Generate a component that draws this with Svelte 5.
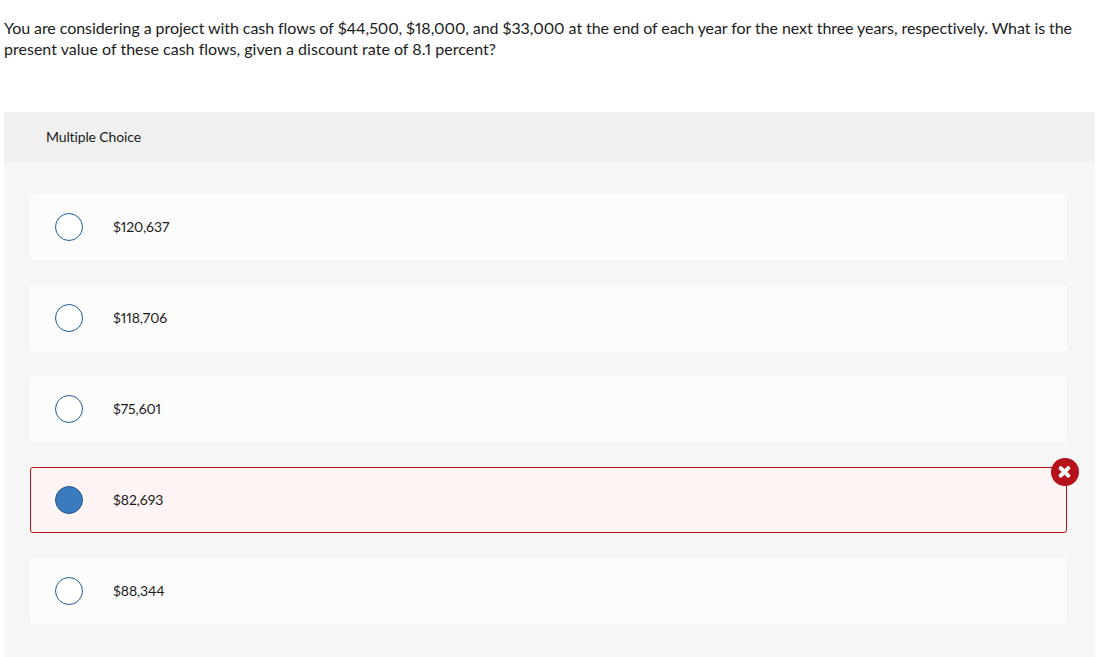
<script lang="ts">
  interface Choice {
    id: number;
    label: string;
  }

  const choices: Choice[] = [
    { id: 1, label: '$120,637' },
    { id: 2, label: '$118,706' },
    { id: 3, label: '$75,601' },
    { id: 4, label: '$82,693' },
    { id: 5, label: '$88,344' },
  ];

  let selected = $state(4);
  const incorrect = 4;
</script>

<main class="question">
  <p class="prompt">
    <span class="line first">You are considering a project with cash flows of $44,500, $18,000, and $33,000 at the end of each year for the next three years, respectively. What is the</span>
    <span class="line second">present value of these cash flows, given a discount rate of 8.1 percent?</span>
  </p>

  <section class="panel">
    <header class="panel-header"><h2>Multiple Choice</h2></header>
    <div class="choices" role="radiogroup" aria-label="Multiple Choice">
      {#each choices as choice (choice.id)}
        <button
          class="choice"
          class:incorrect={choice.id === selected && choice.id === incorrect}
          role="radio"
          aria-checked={choice.id === selected}
          onclick={() => (selected = choice.id)}
        >
          <span class="radio" class:checked={choice.id === selected}></span>
          <span class="label">{choice.label}</span>
          {#if choice.id === selected && choice.id === incorrect}
            <svg class="badge" viewBox="0 0 28 28" aria-hidden="true">
              <circle cx="14" cy="14" r="14" fill="#b5121b" />
              <path d="M9.7 10.1 17.3 17.7M17.3 10.1 9.7 17.7" stroke="#fff" stroke-width="4" stroke-linecap="round" />
            </svg>
          {/if}
        </button>
      {/each}
    </div>
  </section>
</main>

<style>
  :global(body) {
    background: #fff;
    overflow: hidden;
  }
  .question {
    box-sizing: border-box;
    height: 657px;
    padding: 17px 23px 0 4px;
    display: flex;
    flex-direction: column;
    font-family: Lato, 'Open Sans', sans-serif;
    font-variant-ligatures: none;
    font-variant-numeric: proportional-nums;
    color: #1b1b1b;
  }
  .prompt {
    margin: 0;
    height: 95px;
    font-size: 16px;
    line-height: 21px;
    white-space: nowrap;
  }
  .line {
    display: block;
  }
  .first {
    letter-spacing: -0.066px;
  }
  .second {
    letter-spacing: 0.015px;
  }
  .panel {
    flex: 1;
    border-radius: 3px 3px 0 0;
    background: #f6f6f6;
  }
  .panel-header {
    box-sizing: border-box;
    height: 50px;
    padding: 0 0 2px 42px;
    display: flex;
    align-items: center;
    border-radius: 3px 3px 0 0;
    background: #f0f0f0;
  }
  h2 {
    margin: 0;
    font-size: 14px;
    font-weight: 400;
    letter-spacing: -0.13px;
  }
  .choices {
    padding: 32px 28px 0 26px;
    display: flex;
    flex-direction: column;
    gap: 25px;
  }
  .choice {
    position: relative;
    box-sizing: border-box;
    width: 100%;
    height: 66px;
    padding: 0 24px;
    display: flex;
    align-items: center;
    gap: 30px;
    border: 1px solid #fcfcfc;
    border-radius: 3px;
    background: #fcfcfc;
    color: inherit;
    font: inherit;
    font-size: 14px;
    font-variant-ligatures: none;
    font-variant-numeric: proportional-nums;
    text-align: left;
  }
  .choice.incorrect {
    border-color: #b5121b;
    background: #fdf4f3;
  }
  .radio {
    box-sizing: border-box;
    width: 28px;
    height: 28px;
    border: 1px solid #1f5a93;
    border-radius: 50%;
    background: #fff;
  }
  .radio.checked {
    background: #3a7abd;
  }
  .label {
    padding-bottom: 2px;
    letter-spacing: -0.1px;
  }
  .badge {
    position: absolute;
    top: -10px;
    right: -13px;
    width: 28px;
    height: 28px;
  }
</style>
